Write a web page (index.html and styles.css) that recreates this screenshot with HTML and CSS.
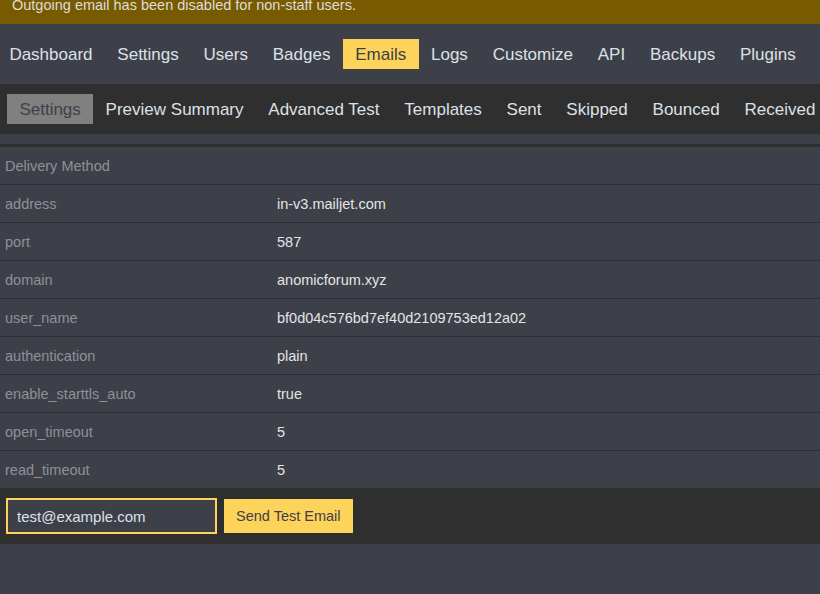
FILE: index.html
```html
<!DOCTYPE html>
<html lang="en">

<head>
    <meta charset="UTF-8">
    <meta name="viewport" content="width=device-width, initial-scale=1.0">
    <title>Admin - Emails</title>
    <link rel="stylesheet" href="styles.css">
</head>

<body>
    <div class="banner">Outgoing email has been disabled for non-staff users.</div>

    <ul class="nav">
        <li>Dashboard</li>
        <li>Settings</li>
        <li>Users</li>
        <li>Badges</li>
        <li class="active">Emails</li>
        <li>Logs</li>
        <li>Customize</li>
        <li>API</li>
        <li>Backups</li>
        <li>Plugins</li>
    </ul>

    <ul class="subnav">
        <li class="active">Settings</li>
        <li>Preview Summary</li>
        <li>Advanced Test</li>
        <li>Templates</li>
        <li>Sent</li>
        <li>Skipped</li>
        <li>Bounced</li>
        <li>Received</li>
    </ul>

    <div class="settings">
        <div class="row">
            <div class="label">Delivery Method</div>
            <div class="value"></div>
        </div>
        <div class="row">
            <div class="label">address</div>
            <div class="value">in-v3.mailjet.com</div>
        </div>
        <div class="row">
            <div class="label">port</div>
            <div class="value">587</div>
        </div>
        <div class="row">
            <div class="label">domain</div>
            <div class="value">anomicforum.xyz</div>
        </div>
        <div class="row">
            <div class="label">user_name</div>
            <div class="value">bf0d04c576bd7ef40d2109753ed12a02</div>
        </div>
        <div class="row">
            <div class="label">authentication</div>
            <div class="value">plain</div>
        </div>
        <div class="row">
            <div class="label">enable_starttls_auto</div>
            <div class="value">true</div>
        </div>
        <div class="row">
            <div class="label">open_timeout</div>
            <div class="value">5</div>
        </div>
        <div class="row">
            <div class="label">read_timeout</div>
            <div class="value">5</div>
        </div>
    </div>

    <div class="test-bar">
        <input type="text" class="test-input" value="test@example.com">
        <button class="btn-test">Send Test Email</button>
    </div>
</body>

</html>
```

FILE: styles.css
```css
html,
body {
    margin: 0;
    padding: 0;
}

body {
    font-family: "Liberation Sans", Arial, sans-serif;
    background-color: #3d4049;
    color: #dddddd;
    overflow: hidden;
}

.banner {
    height: 24px;
    padding: 0 12px;
    line-height: 10px;
    font-size: 14.5px;
    background-color: #785a00;
    color: #dcdcdc;
    white-space: nowrap;
    overflow: hidden;
}

.nav,
.subnav {
    display: flex;
    list-style: none;
    margin: 0;
    white-space: nowrap;
    font-size: 17px;
}

.nav {
    padding: 15px 0;
    margin-left: -3px;
    background-color: #3d4049;
}

.subnav {
    padding: 10px 7px;
    background-color: #2f2f2f;
}

.nav li,
.subnav li {
    padding: 1px 12.4px 0;
    line-height: 29px;
    color: #dde0e6;
    cursor: pointer;
}

.nav li.active {
    background-color: #fed35a;
    color: #3d4049;
}

.subnav li.active {
    background-color: #808080;
    color: #3d4049;
}

.settings {
    margin-top: 10px;
    border-top: 3px solid #2f2f2f;
    font-size: 14.5px;
}

.row {
    display: grid;
    grid-template-columns: 272px 1fr;
    box-sizing: border-box;
    height: 38px;
    padding-top: 1px;
    line-height: 36px;
    border-bottom: 1px solid #2f2f2f;
}

.row:last-child {
    border-bottom: none;
    height: 37px;
}

.label {
    padding-left: 5px;
    color: #8e9196;
}

.value {
    padding-left: 5px;
    color: #e4e4e4;
}

.test-bar {
    display: flex;
    align-items: center;
    gap: 7px;
    height: 56px;
    padding: 0 6px;
    background-color: #2f2f2f;
}

.test-input {
    box-sizing: border-box;
    width: 211px;
    height: 36px;
    padding: 0 9px;
    border: 2px solid #fed35a;
    outline: none;
    background-color: #3d4049;
    color: #dde0e6;
    font-family: inherit;
    font-size: 15px;
}

.btn-test {
    height: 34px;
    padding: 0 12px;
    border: none;
    background-color: #fed35a;
    color: #3d4049;
    font-family: inherit;
    font-size: 14.5px;
    cursor: pointer;
}
```
